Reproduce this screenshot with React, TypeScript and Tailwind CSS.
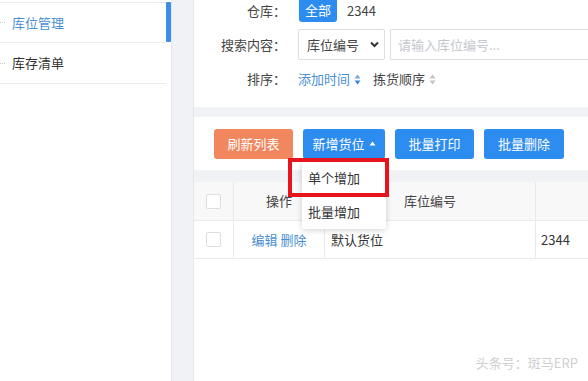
const font = { fontFamily: '"Noto Sans CJK SC", "Noto Sans", sans-serif' };

const SortIcon = ({ active }: { active?: boolean }) => (
  <svg width="7" height="11" viewBox="0 0 7 11" className="ml-[4px]">
    <path d="M3.5 0.5 L6.5 4.5 H0.5 Z" fill={active ? "#7aa7e0" : "#c0c4cc"} />
    <path d="M3.5 10.5 L6.5 6.5 H0.5 Z" fill={active ? "#3b82e0" : "#c0c4cc"} />
  </svg>
);

const Checkbox = () => (
  <div className="w-[15px] h-[15px] border border-[#dcdee2] rounded-[2px] bg-white" />
);

const Dots = () => (
  <div className="w-[5px] mr-[7px] border-t border-dotted border-[#c8c8c8]" />
);

const App = () => {
  return (
    <div className="w-[588px] h-[381px] flex overflow-hidden bg-[#f0f2f5] text-[13px] text-[#444]" style={font}>
      {/* sidebar */}
      <div className="w-[171px] bg-white flex shrink-0">
        <div className="flex-1 pt-[2px]">
          <div className="h-[41px] border-b border-t border-[#ebebeb] flex items-center">
            <Dots />
            <span className="text-[#4a8fd3]">库位管理</span>
          </div>
          <div className="h-[41px] border-b border-[#ebebeb] flex items-center">
            <Dots />
            <span className="text-[#333]">库存清单</span>
          </div>
        </div>
        <div className="w-[5px] pt-[2px]">
          <div className="h-[40px] bg-[#3d8ee6] rounded-[1px]" />
        </div>
      </div>
      <div className="w-[22px] border-l border-[#e4e6ea] shrink-0" />

      {/* main */}
      <div className="flex-1 flex flex-col border-l border-[#e6e8eb] min-w-0">
        {/* filter panel */}
        <div className="h-[107px] bg-white shrink-0">
          <div className="h-[22px] flex items-center">
            <div className="w-[92px] text-right text-[#444]">仓库：</div>
            <div className="ml-[13px] h-[24px] mt-[-2px] px-[6px] bg-[#2d8cf0] text-white rounded-[3px] flex items-center">全部</div>
            <div className="ml-[10px]">2344</div>
          </div>
          <div className="h-[31px] mt-[7px] flex items-center">
            <div className="w-[92px] text-right">搜索内容：</div>
            <div className="ml-[12px] w-[87px] h-[31px] border border-[#dcdee2] rounded-[2px] flex items-center pl-[8px] pr-[5px] justify-between">
              <span>库位编号</span>
              <svg width="9" height="7" viewBox="0 0 9 7">
                <path d="M1 1.5 L4.5 5 L8 1.5" fill="none" stroke="#333" strokeWidth="2" />
              </svg>
            </div>
            <div className="ml-[5px] flex-1 h-[31px] border border-[#dcdee2] border-r-0 rounded-l-[2px] flex items-center pl-[7px] text-[#c5c8ce] whitespace-nowrap">
              请输入库位编号...
            </div>
          </div>
          <div className="h-[22px] mt-[8px] flex items-center">
            <div className="w-[92px] text-right">排序：</div>
            <div className="ml-[12px] flex items-center text-[#4a8fd3]">添加时间<SortIcon active /></div>
            <div className="ml-[12px] flex items-center text-[#444]">拣货顺序<SortIcon /></div>
          </div>
        </div>

        {/* button panel */}
        <div className="mt-[10px] h-[53px] bg-white shrink-0 flex items-center pl-[20px] gap-[10px] relative">
          <button className="h-[30px] w-[79px] rounded-[3px] bg-[#f0875f] text-white">刷新列表</button>
          <button className="h-[30px] w-[82px] rounded-[3px] bg-[#2d8cf0] text-white flex items-center justify-center">
            新增货位
            <svg width="7" height="5" viewBox="0 0 7 5" className="ml-[4px]">
              <path d="M3.5 0.5 L6.5 4.5 H0.5 Z" fill="white" />
            </svg>
          </button>
          <button className="h-[30px] w-[79px] rounded-[3px] bg-[#2d8cf0] text-white">批量打印</button>
          <button className="h-[30px] w-[80px] rounded-[3px] bg-[#2d8cf0] text-white">批量删除</button>

          {/* dropdown */}
          <div className="absolute left-[108px] top-[44px] w-[84px] h-[68px] bg-white shadow-[0_1px_6px_rgba(0,0,0,0.18)] rounded-[3px] z-10 flex flex-col">
            <div className="h-[34px] flex items-center pl-[6px] text-[#333]">单个增加</div>
            <div className="h-[34px] flex items-center pl-[6px] text-[#333]">批量增加</div>
          </div>
          <div className="absolute left-[94px] top-[41px] w-[101px] h-[39px] border-[4px] border-[#e8141c] z-20" />
        </div>

        {/* table */}
        <div className="mt-[12px] flex-1 bg-white">
          <div className="h-[39px] bg-[#f8f8f9] border-b border-[#e8eaec] flex">
            <div className="w-[40px] flex items-center justify-center border-r border-[#e8eaec]"><Checkbox /></div>
            <div className="w-[91px] flex items-center justify-center border-r border-[#e8eaec]">操作</div>
            <div className="w-[211px] flex items-center justify-center border-r border-[#e8eaec]">库位编号</div>
            <div className="flex-1" />
          </div>
          <div className="h-[38px] border-b border-[#e8eaec] flex">
            <div className="w-[40px] flex items-center justify-center border-r border-[#e8eaec]"><Checkbox /></div>
            <div className="w-[91px] flex items-center justify-center border-r border-[#e8eaec] text-[#4a8fd3]">编辑 删除</div>
            <div className="w-[211px] flex items-center pl-[6px] border-r border-[#e8eaec] text-[#333]">默认货位</div>
            <div className="flex-1 flex items-center pl-[5px] text-[#333]">2344</div>
          </div>
          <div className="flex justify-end pr-[10px] pt-[94px] text-[#d0d0d0] text-[13px]">头条号：斑马ERP</div>
        </div>
      </div>
    </div>
  );
};

export default App;
